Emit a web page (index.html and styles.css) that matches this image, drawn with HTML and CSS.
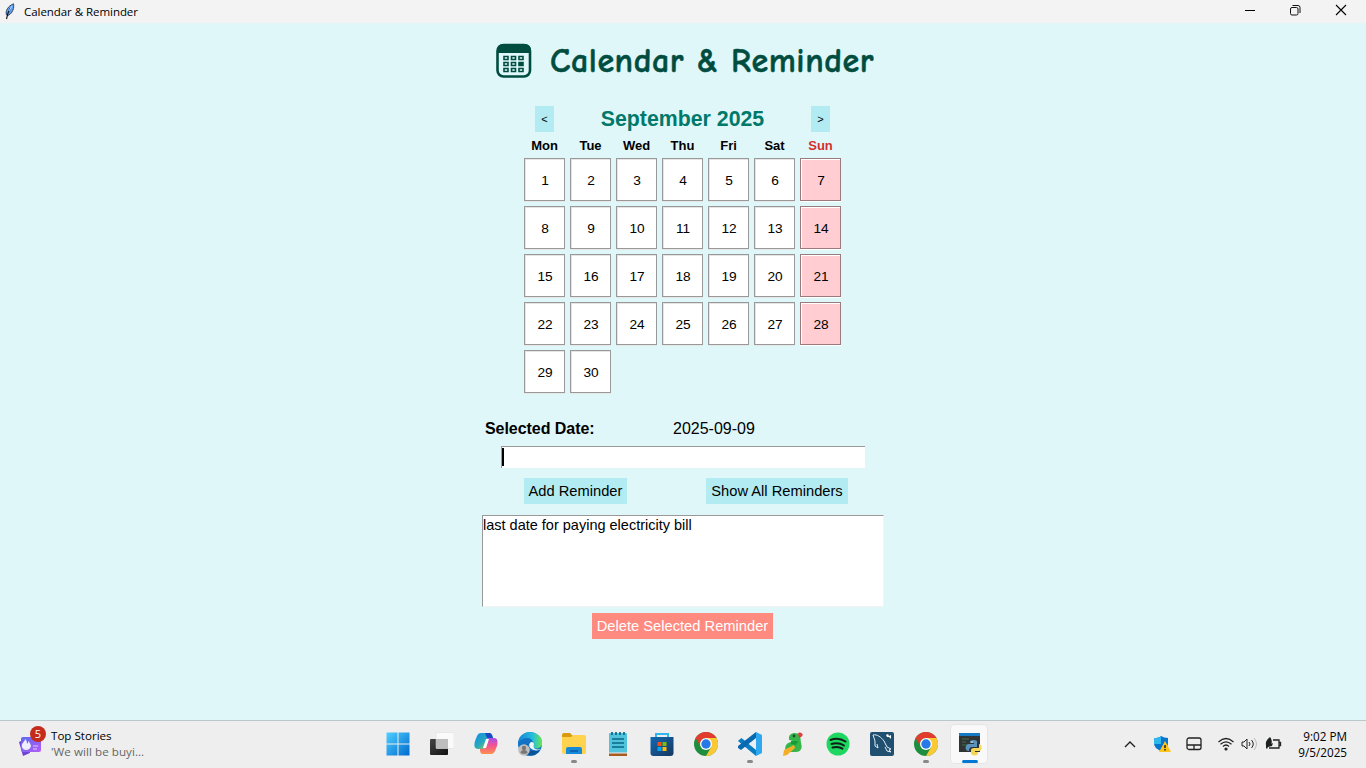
FILE: index.html
```html
<!DOCTYPE html>
<html lang="en">
<head>
<meta charset="utf-8">
<title>Calendar &amp; Reminder</title>
<link rel="stylesheet" href="styles.css">
</head>
<body>
<div class="titlebar">
  <svg class="feather" width="12" height="17" viewBox="0 0 12 17"><path d="M2.500 12C1 8 4 3 9.500 .8c.8 4-.5 9-5 11.500z" fill="#5ba0f5" stroke="#222b38" stroke-width=".8"/><path d="M6.500 5 4 10l-1.500 6" fill="none" stroke="#111" stroke-width="1.100"/><path d="M8 3 5 8" stroke="#b9d8ff"/></svg>
  <span class="window-name">Calendar &amp; Reminder</span>
  <div class="window-controls">
    <svg width="12" height="12" viewBox="0 0 12 12"><path d="M1 6.500h10" stroke="#000"/></svg>
    <svg class="restore" width="12" height="12" viewBox="0 0 12 12" fill="none" stroke="#111"><rect x="1.500" y="3.500" width="7.500" height="7.500" rx="1.500"/><path d="M3.500 1.500H9a2 2 0 0 1 2 2V9"/></svg>
    <svg width="12" height="12" viewBox="0 0 12 12"><path d="m1 1 10 10M11 1 1 11" stroke="#000" stroke-width="1.100"/></svg>
  </div>
</div>
<main class="app">
  <header class="heading">
    <svg width="36" height="36" viewBox="0 0 36 36"><rect x="1.500" y="2" width="32.500" height="31.500" rx="6" fill="none" stroke="#004d40" stroke-width="2.600"/><path d="M1 10V7a6 6 0 0 1 6-6h22a6 6 0 0 1 6 6v3z" fill="#004d40"/><g fill="none" stroke="#004d40" stroke-width="1.600"><path d="M8 13.500h4v3H8zM15.500 13.500h4v3h-4zM23 13.500h4v3h-4zM8 19.500h4v3H8zM15.500 19.500h4v3h-4zM8 25.500h4v3H8zM15.500 25.500h4v3h-4zM23 25.500h4v3h-4z"/><path d="M23 19.500h4v3h-4z" fill="#004d40"/></g></svg>
    <h1>Calendar &amp; Reminder</h1>
  </header>
  <div class="month-nav"><button class="nav-button">&lt;</button><h2>September 2025</h2><button class="nav-button">&gt;</button></div>
  <div class="weekdays"><span>Mon</span><span>Tue</span><span>Wed</span><span>Thu</span><span>Fri</span><span>Sat</span><span class="sunday-name">Sun</span></div>
  <div class="days">
    <button>1</button><button>2</button><button>3</button><button>4</button><button>5</button><button>6</button><button class="sunday">7</button>
    <button>8</button><button>9</button><button>10</button><button>11</button><button>12</button><button>13</button><button class="sunday">14</button>
    <button>15</button><button>16</button><button>17</button><button>18</button><button>19</button><button>20</button><button class="sunday">21</button>
    <button>22</button><button>23</button><button>24</button><button>25</button><button>26</button><button>27</button><button class="sunday">28</button>
    <button>29</button><button>30</button>
  </div>
  <div class="selected"><strong>Selected Date:</strong><span>2025-09-09</span></div>
  <div class="entry"><span class="caret"></span></div>
  <div class="actions"><button class="add">Add Reminder</button><button class="show">Show All Reminders</button></div>
  <div class="list">last date for paying electricity bill</div>
  <button class="delete">Delete Selected Reminder</button>
</main>
<footer class="taskbar">
  <div class="widget">
    <div class="news"><svg width="26" height="26" viewBox="0 0 26 26"><defs><linearGradient id="news" x2="1" y2="1"><stop stop-color="#5c6bef"/><stop offset="1" stop-color="#b45cf8"/></linearGradient></defs><path d="m1 11 8-4 3 15-7 3z" fill="#7042d8"/><rect x="3" y="6" width="20" height="15" rx="2" fill="url(#news)"/><path d="M7 8c0 3-4 4-3 8 1 4 8 4 9-1 0-2-2-3-2-5-1 1-1 2-2 3 0-3-1-4-2-5z" fill="#f0edff"/><path d="M15 15h5M15 18h4" stroke="#e6c9ff"/></svg><span class="count">5</span></div>
    <div class="stories"><span>Top Stories</span><span class="headline">'We will be buyi...</span></div>
  </div>
  <div class="apps">
    <div class="task"><svg viewBox="0 0 24 24"><defs><linearGradient id="win" x2="1" y2="1"><stop stop-color="#50d0ff"/><stop offset="1" stop-color="#0069cf"/></linearGradient></defs><path d="M.5.500h11v11H.500zM12.500.500h11v11h-11zM.5 12.500h11v11H.500zM12.500 12.500h11v11h-11z" fill="url(#win)"/></svg></div>
    <div class="task"><svg viewBox="0 0 24 24"><defs><linearGradient id="view" y2="1" x2="1"><stop stop-color="#454545"/><stop offset="1" stop-color="#111"/></linearGradient></defs><rect y="7" width="18" height="16" rx="1" fill="url(#view)"/><rect x="6" y=".5" width="18" height="16" rx="1" fill="#fafafa" stroke="#ddd" stroke-width=".5"/><path d="M6 7h12v9.500H6z" fill="#bdbdbd"/></svg></div>
    <div class="task"><svg viewBox="0 0 24 24"><defs><linearGradient id="copL" y2="1"><stop stop-color="#118ce9"/><stop offset=".5" stop-color="#26a9bd"/><stop offset="1" stop-color="#ddd91a"/></linearGradient><linearGradient id="copR" x2="0" y2="1"><stop stop-color="#a54eed"/><stop offset=".5" stop-color="#f6558b"/><stop offset="1" stop-color="#ff914d"/></linearGradient></defs><path d="M7 1h8c2 0 3 1 4 5h-5L10 17H4c-4 0-4-4-3-8l2-5c1-2 2-3 4-3z" fill="url(#copL)"/><path d="M11 1h4c2 0 3 1 4 5h-6z" fill="#184cc4"/><path d="M17 22H9c-2 0-3-1-3-5h4l4-11h6c4 0 4 4 3 8l-2 5c-1 2-2 3-4 3z" fill="url(#copR)"/><path d="m12 16 3-9h-3L9 16z" fill="#fff"/></svg></div>
    <div class="task"><svg viewBox="0 0 24 24"><defs><linearGradient id="edge"><stop stop-color="#1682d7"/><stop offset=".6" stop-color="#24bfdc"/><stop offset="1" stop-color="#70e64a"/></linearGradient></defs><circle cx="12" cy="12" r="12" fill="#1273c5"/><path d="M0 11C1 4 6 0 12 0c8 0 14 7 12 13-1 3-5 4-8 3-3-1-1-3-1-5 0-6-10-7-15 0z" fill="url(#edge)"/><path d="M10 12c-3 5 4 9 12 6-4 7-12 6-15 3-3-4-1-8 3-9z" fill="#095399"/><path d="M13 10c-4 3-1 7 3 8 3 1 5 0 7-1-8 2-8-3-7-5-1-2-2-2-3-2z" fill="#f1f5f7"/><circle cx="6" cy="18" r="5.800" fill="#c1bfbd"/><circle cx="6" cy="16" r="2.200" fill="#777"/><path d="M2.500 21c0-4 7-4 7 0-1 1-6 1-7 0" fill="#777"/></svg></div>
    <div class="task running"><svg viewBox="0 0 24 24"><path d="M0 3q0-2 2-2h6l3 3h11q2 0 2 2v14H0z" fill="#d99a0c"/><path d="M0 5h9l2-2h11q2 0 2 2v15q0 2-2 2H2q-2 0-2-2z" fill="#ffd34d"/><path d="M4 22v-5q0-2 2-2h12q2 0 2 2v5z" fill="#1689d9"/><path d="M8 19h8" stroke="#075aa4" stroke-width="1.500"/></svg></div>
    <div class="task"><svg viewBox="0 0 24 24"><path d="M3 20h18v4H3z" fill="#a95a20"/><rect x="3" y="1" width="18" height="20" rx="1" fill="#52c3dc"/><path d="M3 21h18" stroke="#eee"/><path d="M6 0v3m4-3v3m4-3v3m4-3v3M6 7h12M6 11h12M6 15h12" stroke="#086987" stroke-width="1.700"/></svg></div>
    <div class="task"><svg viewBox="0 0 24 24"><defs><linearGradient id="store" x2="1" y2="1"><stop stop-color="#126ab4"/><stop offset="1" stop-color="#17365e"/></linearGradient></defs><path d="M6 7V2h12v5" fill="none" stroke="#33b6ef" stroke-width="2"/><path d="M.5 5h23v16q0 3-3 3h-17q-3 0-3-3z" fill="url(#store)"/><path d="M7.500 10h4v4h-4z" fill="#f05020"/><path d="M12.500 10h4v4h-4z" fill="#80ba09"/><path d="M7.500 15h4v4h-4z" fill="#03a6f0"/><path d="M12.500 15h4v4h-4z" fill="#ffba08"/></svg></div>
    <div class="task"><svg viewBox="0 0 24 24"><g id="chrome"><circle cx="12" cy="12" r="12" fill="#1e8e3e"/><path d="M12 6h10.400A12 12 0 0 1 12 24l5.200-9z" fill="#fcc934"/><path d="M1.600 6A12 12 0 0 1 22.400 6H12a6 6 0 0 0-5.200 9z" fill="#e33b2e"/><circle cx="12" cy="12" r="6" fill="#fff"/><circle cx="12" cy="12" r="4.700" fill="#2878e6"/></g></svg></div>
    <div class="task running"><svg viewBox="0 0 24 24"><path d="M1 8 3.500 6 18 18v6L0 9z" fill="#087dc4"/><path d="M0 16v-2L18 0v6L3 18z" fill="#0869b1"/><path d="m18 0 6 3v18l-6 3z" fill="#2fa8f2"/></svg></div>
    <div class="task"><svg viewBox="0 0 24 24"><path d="M7 5c1-5 8-5 11-2l1 8c2 6-1 9-5 9H4c-2-5 0-9 5-10l2-1-4-1z" fill="#36b64a"/><path d="M9 9h7l-2 4-5-1z" fill="#169c36"/><circle cx="12" cy="4" r="1.400" fill="#14512c"/><path d="m2 18 10-5 1 3-8 7-4 1z" fill="#f4ae28"/><path d="M16 1c3-2 7 2 3 4l-2 1z" fill="#dc4040"/></svg></div>
    <div class="task"><svg viewBox="0 0 24 24"><circle cx="12" cy="12" r="11.500" fill="#1ed760"/><path d="M4.500 8q8-3 15 1.500M5.500 12q7-2 12.500 1.500M6.500 15.500q6-1.500 10 1.200" fill="none" stroke="#101d15" stroke-width="2" stroke-linecap="round"/></svg></div>
    <div class="task"><svg viewBox="0 0 24 24"><rect width="24" height="24" rx="2" fill="#204f70"/><path d="M3 3c4-1 8 2 11 6l3 6 4 2-2 1 2 2-4-1-2-4M3 3l2 6v5l3 2-1-4" fill="none" stroke="#e1edf2" stroke-width="1"/><path d="m16 3 2-1 1 2 2-1v4l-2-2-2 0z" fill="#fff"/></svg></div>
    <div class="task running"><svg viewBox="0 0 24 24"><use href="#chrome"/></svg></div>
    <div class="task active"><svg viewBox="0 0 24 24"><path d="M1 1h21v19H1z" fill="#303434"/><path d="M1 1h21v3H1z" fill="#1679c4"/><path d="M4 7h7m-7 3h4m-4 3h6" stroke="#387048"/><path d="M12 9q4-2 7 0v6h-5q-3 0-3 4c-5 0-4-7 0-7h5v-1h-4z" fill="#5b91bd"/><path d="M13 22v-4q0-2 3-2h5v-4c4 1 3 7 0 7h-4v1h3v2q-3 3-7 0z" fill="#f5d657"/><circle cx="14" cy="10" r=".7" fill="#fff"/></svg></div>
  </div>
  <div class="tray">
    <svg width="12" height="16" viewBox="0 0 12 16"><path d="m1 11 5-5 5 5" fill="none" stroke="#202020" stroke-width="1.400"/></svg>
    <svg class="shield" width="17" height="18" viewBox="0 0 17 18"><path d="M0 3q5 0 7-2 3 2 7 2v5c0 4-3 6-7 8-5-2-7-5-7-8z" fill="#0875cf"/><path d="M7 1v8H0V3q5 0 7-2" fill="#30b8eb"/><path d="m11 6 6 11H5z" fill="#ffc51b"/><path d="M11 10v3m0 1v1.500" stroke="#222" stroke-width="1.500"/></svg>
    <svg class="touchpad" width="16" height="14" viewBox="0 0 16 14"><rect x="1" y="1" width="14" height="11.500" rx="2" fill="none" stroke="#222" stroke-width="1.300"/><path d="M1 8h14M8 8v4" stroke="#222" stroke-width="1.300"/></svg>
    <svg class="wifi" width="16" height="14" viewBox="0 0 16 14" fill="none" stroke="#202020" stroke-width="1.200"><path d="M.5 5q7.500-7 15 0M2.500 7.300q5.500-5 11 0M5 9.500q3-3 6 0"/><circle cx="8" cy="12" r="1" fill="#202020"/></svg>
    <svg class="speaker" width="17" height="14" viewBox="0 0 17 14" fill="none" stroke="#222"><path d="M1 5h2l3-3v10L3 9H1zM8 5q2 2 0 4M10.500 3q3.500 4 0 8"/><path d="M13 1q5 6 0 12" stroke="#bbb"/></svg>
    <svg class="battery" width="17" height="14" viewBox="0 0 17 14"><path d="M8 3h6v8H4M14 5.500h1.500v3H14" fill="none" stroke="#222" stroke-width="1.300"/><path d="M1 8C0 4 3 2 5 0c3 4 2 8-1 8l4-2-1 3-4 1-1 2-1-1z" fill="#1c2020"/></svg>
    <div class="clock"><span>9:02 PM</span><span>9/5/2025</span></div>
  </div>
</footer>
</body>
</html>
```
FILE: styles.css
```css
* { box-sizing: border-box; }
body { margin: 0; height: 768px; overflow: hidden; display: flex; flex-direction: column; background: #e0f7fa; color: #000; font-family: "Liberation Sans", Arial, sans-serif; }
button { border: 0; padding: 0; font: inherit; color: inherit; background: #b2ebf2; }
svg { display: block; flex: none; }
.titlebar { height: 23px; padding: 0 19px 0 5px; display: flex; align-items: center; background: #f3f3f3; font: 11.500px/22px "Open Sans", sans-serif; }
.feather { margin-left: -1px; }
.window-name { margin-left: 8px; letter-spacing: -.05px; }
.window-controls { margin-left: auto; display: flex; gap: 34px; align-items: center; padding-bottom: 3px; }
.restore { margin-left: -1px; }
.app { height: 697px; display: flex; flex-direction: column; align-items: center; }
.heading { width: 380px; height: 83px; padding: 20px 0 0 3px; display: flex; align-items: flex-start; gap: 18px; color: #004d40; }
.heading h1 { margin: 0; font: 700 34px/36px "Comic Sans MS", "Comic Neue", "Noto Sans", sans-serif; letter-spacing: .55px; white-space: nowrap; -webkit-text-stroke: .5px #004d40; }
.month-nav { width: 295px; height: 26px; margin-right: 1px; display: flex; align-items: center; justify-content: space-between; }
.month-nav h2 { margin: 0; font-size: 21.300px; line-height: 26px; color: #00796b; }
.nav-button { width: 19px; height: 26px; font-size: 11px; }
.weekdays { width: 322px; height: 26px; margin-right: 1px; display: grid; grid-template-columns: repeat(7, 46px); font-size: 13px; font-weight: bold; line-height: 27px; text-align: center; }
.sunday-name { color: #d32f2f; }
.days { width: 317px; margin-right: 1px; display: grid; grid-template-columns: repeat(7, 41px); grid-auto-rows: 43px; gap: 5px; font-size: 13.700px; letter-spacing: -.4px; }
.days button { padding: 2px 0 0 1px; background: #fff; border: 1px solid #999; box-shadow: inset 1px 1px #e5e5e5, 0 1px #e6e8e8; }
.days .sunday { background: #ffcdd2; border-color: #997b7e; box-shadow: inset 1px 1px #fff, 0 1px #fff; }
.selected { width: 396px; height: 53px; padding-top: 25px; display: flex; font-size: 16px; line-height: 22px; }
.selected strong { width: 188px; letter-spacing: -.05px; }
.entry { width: 364px; height: 22px; padding: 1px 0; background: #fff; border-top: 1px solid #999; border-left: 1px solid #999; }
.caret { display: block; width: 2px; height: 18px; background: #000; }
.actions { width: 324px; height: 37px; margin-left: 6px; padding-top: 10px; display: flex; justify-content: space-between; font-size: 14.700px; }
.actions button { height: 26px; }
.add { width: 103px; }
.show { width: 142px; }
.list { width: 402px; height: 92px; margin-top: 10px; background: #fff; border: 1px solid; border-color: #999 #f3f3f3 #f3f3f3 #999; font-size: 14.500px; line-height: 18px; }
.app .delete { width: 181px; height: 26px; margin: 6px 1px 0 0; color: #fff; background: #ff8a80; font-size: 14.700px; }
.taskbar { height: 48px; padding-bottom: 2px; display: grid; grid-template-columns: 375px 616px 375px; border-top: 1px solid #bcc7c9; background: #eee; font-family: "Open Sans", sans-serif; }
.widget { padding-left: 18px; display: flex; align-items: center; gap: 7px; font-size: 11.600px; line-height: 16px; }
.news { position: relative; }
.count { position: absolute; left: 12px; top: -5px; width: 16px; height: 16px; border-radius: 50%; background: #c42b1c; color: #fff; text-align: center; font-size: 11px; line-height: 16px; }
.stories { display: flex; flex-direction: column; }
.headline { color: #666; letter-spacing: .05px; }
.apps { display: flex; align-items: center; }
.task { position: relative; width: 44px; height: 40px; flex: none; display: grid; place-items: center; }
.task svg { width: 24px; height: 24px; margin-left: 1px; }
.running::after, .active::after { content: ""; position: absolute; bottom: 1px; left: 20px; width: 6px; height: 3px; border-radius: 2px; background: #888; }
.active::before { content: ""; position: absolute; inset: 0 3px; border: 1px solid #e5e5e5; border-radius: 4px; background: #f9f9f9; }
.active svg { position: relative; }
.active::after { left: 15px; width: 16px; background: #0078d4; }
.tray { display: flex; align-items: center; padding-left: 133px; }
.shield { margin-left: 18px; }
.touchpad { margin-left: 15px; }
.wifi { margin-left: 16px; }
.speaker { margin-left: 7px; }
.battery { margin-left: 7px; }
.clock { margin: 0 19px 0 auto; display: flex; flex-direction: column; text-align: right; font-size: 11.700px; line-height: 16px; }
```
